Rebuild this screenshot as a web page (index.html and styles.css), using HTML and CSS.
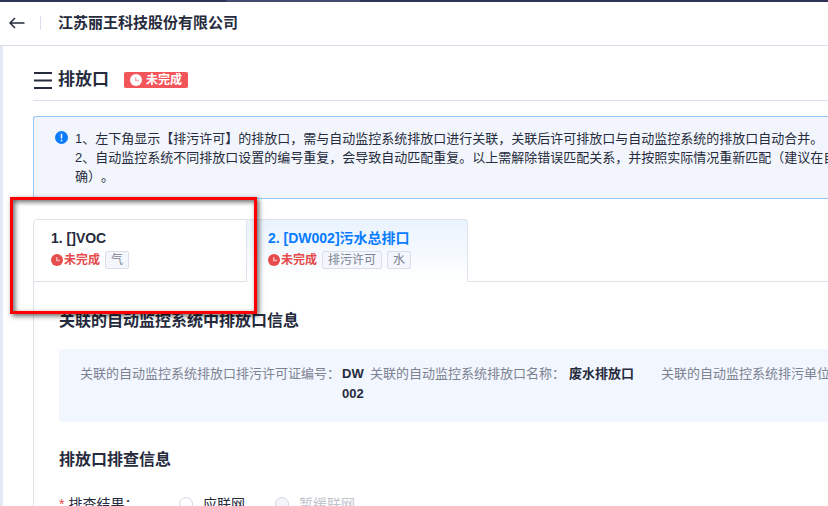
FILE: index.html
```html
<!DOCTYPE html>
<html lang="zh-CN">

<head>
    <meta charset="UTF-8">
    <meta name="viewport" content="width=device-width, initial-scale=1.0">
    <title>排放口</title>
    <link rel="stylesheet" href="styles.css">
</head>

<body>
    <!-- Clock icon shared by the status labels -->
    <svg class="sprite" aria-hidden="true">
        <symbol id="clock" viewBox="0 0 12 12">
            <circle cx="6" cy="6" r="6" fill="currentColor" />
            <path class="clock-hands" d="M5.7 3v3.6H9" fill="none" stroke-width="1.5" />
        </symbol>
    </svg>

    <header class="header">
        <button class="back" type="button" aria-label="返回">
            <svg width="16" height="12" viewBox="0 0 16 12" fill="none" stroke="currentColor" stroke-width="1.5">
                <path d="M15.500 6H1M6 1L1 6l5 5" />
            </svg>
        </button>
        <h1 class="company">江苏丽王科技股份有限公司</h1>
    </header>

    <main class="content">
        <div class="page-title">
            <svg width="18" height="18" viewBox="0 0 18 18" stroke="currentColor" stroke-width="2">
                <path d="M0 2h18M0 9.500h18M0 17h18" />
            </svg>
            <h2>排放口</h2>
            <span class="badge"><svg width="12" height="12"><use href="#clock" /></svg>未完成</span>
        </div>

        <div class="notice">
            <svg class="notice-icon" width="13" height="13" viewBox="0 0 13 13">
                <circle cx="6.500" cy="6.500" r="6.500" fill="#0a7cff" />
                <path d="M6.500 2.800v4.600M6.500 8.700v1.600" stroke="#fff" stroke-width="1.500" />
            </svg>
            <p>1、左下角显示【排污许可】的排放口，需与自动监控系统排放口进行关联，关联后许可排放口与自动监控系统的排放口自动合并。<br>
                2、自动监控系统不同排放口设置的编号重复，会导致自动匹配重复。以上需解除错误匹配关系，并按照实际情况重新匹配（建议在自<br>
                确）。</p>
        </div>

        <div class="tabs">
            <button class="tab" type="button">
                <span class="tab-name">1. []VOC</span>
                <span class="tab-info">
                    <span class="status"><svg width="12" height="12"><use href="#clock" /></svg>未完成</span>
                    <span class="tag">气</span>
                </span>
            </button>
            <button class="tab active" type="button">
                <span class="tab-name">2. [DW002]污水总排口</span>
                <span class="tab-info">
                    <span class="status"><svg width="12" height="12"><use href="#clock" /></svg>未完成</span>
                    <span class="tag">排污许可</span>
                    <span class="tag">水</span>
                </span>
            </button>
            <div class="tabs-rest"></div>
        </div>

        <section class="panel">
            <h3>关联的自动监控系统中排放口信息</h3>
            <dl class="related">
                <dt>关联的自动监控系统排放口排污许可证编号：</dt>
                <dd class="code">DW002</dd>
                <dt>关联的自动监控系统排放口名称：</dt>
                <dd class="name">废水排放口</dd>
                <dt>关联的自动监控系统排污单位名</dt>
            </dl>

            <h3>排放口排查信息</h3>
            <div class="form-row" role="radiogroup" aria-labelledby="result-label">
                <span class="form-label" id="result-label"><span class="required">*</span>排查结果：</span>
                <label class="radio"><input type="radio" name="result">应联网</label>
                <label class="radio disabled"><input type="radio" name="result" disabled>暂缓联网</label>
            </div>
        </section>
    </main>

    <!-- Red frame around the first tab -->
    <div class="highlight"></div>
</body>

</html>
```

FILE: styles.css
```css
* {
    box-sizing: border-box;
}

body {
    margin: 0;
    position: relative;
    display: flex;
    flex-direction: column;
    height: 100vh;
    overflow: hidden;
    background-color: #e4eaf3;
    color: #262b3d;
    font-family: "Liberation Sans", "Noto Sans CJK SC", sans-serif;
    font-size: 13px;
    text-spacing-trim: space-all;
}

h1,
h2,
h3,
p,
dl,
dd {
    margin: 0;
}

button {
    font-family: inherit;
    text-align: left;
    cursor: pointer;
}

svg {
    flex: none;
}

.sprite {
    position: absolute;
    width: 0;
    height: 0;
}

/* Header */
.header {
    flex: none;
    display: flex;
    align-items: center;
    height: 46px;
    border-bottom: 1px solid #dadeea;
    /* Dark strip along the top with one lighter part */
    background: linear-gradient(90deg, #2f3355 226px, #474a70 226px, #474a70 360px, #2f3355 360px) top / 100% 2px no-repeat #fff;
}

.back {
    display: flex;
    padding: 0 15px 0 9px;
    border: none;
    background: none;
    color: #262b3d;
}

.company {
    padding-left: 18px;
    font-size: 15px;
    line-height: 16px;
    position: relative;
}

.company::before {
    content: "";
    position: absolute;
    left: 0;
    top: 1px;
    width: 1px;
    height: 14px;
    background-color: #dadeea;
}

/* Content */
.content {
    flex: 1;
    min-height: 0;
    margin-left: 3px;
    padding-left: 30px;
    background-color: #fff;
    overflow: hidden;
}

.page-title {
    display: flex;
    align-items: center;
    height: 55px;
    padding: 13px 0 0 1px;
    border-bottom: 1px solid #d9dfea;
}

.page-title h2 {
    margin: 0 15px 0 6px;
    font-size: 17px;
    line-height: 24px;
}

.badge {
    display: flex;
    align-items: center;
    gap: 4px;
    height: 16px;
    padding: 0 6px;
    border-radius: 2px;
    background-color: #f2555a;
    color: #fff;
    font-size: 12px;
    font-weight: bold;
    line-height: 16px;
}

.clock-hands {
    stroke: #f6b5b5;
}

.notice {
    display: flex;
    gap: 7px;
    height: 83px;
    margin-top: 15px;
    padding: 12px 0 0 21px;
    border: 1px solid #94c8fb;
    border-right: none;
    border-radius: 3px 0 0 3px;
    background-color: #f2f6fc;
    line-height: 19px;
    white-space: nowrap;
    overflow: hidden;
}

.notice-icon {
    margin-top: 2px;
}

/* Tabs */
.tabs {
    display: flex;
    height: 63px;
    margin-top: 20px;
}

.tab {
    width: 214px;
    padding: 9px 0 0 17px;
    border: 1px solid #dfe2ea;
    border-radius: 4px 0 0 0;
    background-color: #fff;
    color: #262b3d;
    display: flex;
    flex-direction: column;
    gap: 4px;
}

.tab.active {
    width: 221px;
    padding-left: 21px;
    border-left: none;
    border-bottom: none;
    border-radius: 0 4px 0 0;
    background: linear-gradient(#e9f3fe, #fff);
    color: #0a7cff;
}

.tabs-rest {
    flex: 1;
    border-bottom: 1px solid #dfe2ea;
}

.tab-name {
    font-size: 14px;
    font-weight: bold;
    line-height: 18px;
}

.tab-info {
    display: flex;
    gap: 5px;
    font-size: 12px;
}

.status {
    display: flex;
    align-items: center;
    gap: 1px;
    height: 18px;
    color: #e64c4c;
    font-weight: bold;
    line-height: 16px;
}

.tag {
    height: 18px;
    padding: 0 5px;
    border: 1px solid #d9deea;
    border-radius: 2px;
    background-color: #f3f6fc;
    color: #7c8292;
    line-height: 16px;
}

/* Panel */
.panel {
    height: 100%;
    padding: 27px 0 0 25px;
    border-left: 1px solid #dfe2ea;
}

.panel h3 {
    font-size: 16px;
    line-height: 24px;
}

.related {
    display: flex;
    height: 73px;
    margin: 16px 0 26px;
    padding: 15px 0 0 21px;
    border-radius: 3px 0 0 3px;
    background-color: #f2f6fe;
    line-height: 20px;
    white-space: nowrap;
    overflow: hidden;
}

.related dt {
    flex: none;
    color: #7c8292;
}

.related dd {
    flex: none;
    font-weight: bold;
}

.related .code {
    width: 30px;
    padding: 0 5px 0 2px;
    word-break: break-all;
    white-space: normal;
}

.related .name {
    width: 96px;
    padding-left: 4px;
}

.form-row {
    display: flex;
    align-items: center;
    height: 20px;
    margin-top: 22px;
    font-size: 14px;
    line-height: 20px;
}

.form-label {
    width: 120px;
}

.required {
    margin-right: 4px;
    color: #e64c4c;
}

.radio {
    display: flex;
    align-items: center;
    gap: 10px;
    margin-right: 30px;
}

.radio input {
    appearance: none;
    width: 14px;
    height: 14px;
    margin: 0;
    border: 1px solid #d3d8e3;
    border-radius: 50%;
    background-color: #fff;
}

.radio.disabled {
    color: #bfc3cc;
}

.radio.disabled input {
    background-color: #f3f5fa;
}

.highlight {
    position: absolute;
    left: 10px;
    top: 197px;
    width: 247px;
    height: 117px;
    border: 3px solid #ff0000;
    box-shadow: 2px 2px 5px rgba(0, 0, 0, 0.6), inset 2px 2px 5px rgba(0, 0, 0, 0.6);
    pointer-events: none;
}
```
